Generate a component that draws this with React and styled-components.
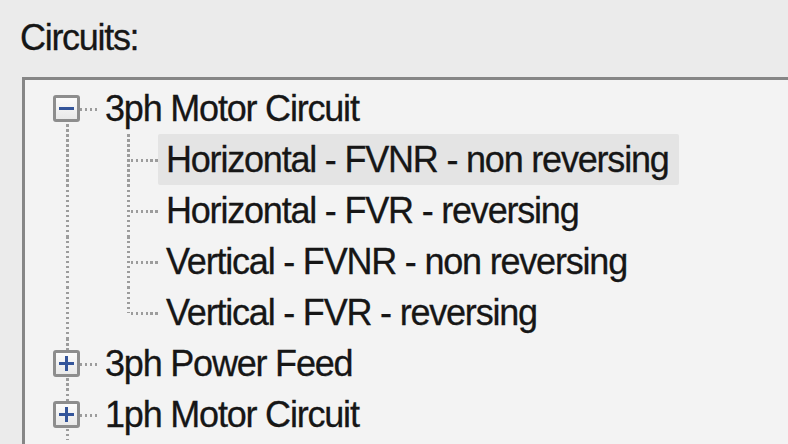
import React from "react"
import styled, { createGlobalStyle } from "styled-components"

const Global = createGlobalStyle`
  html, body {
    margin: 0;
    padding: 0;
    background: #ebebeb;
    overflow: hidden;
  }
  body {
    width: 788px;
    height: 444px;
    font-family: "Liberation Sans", Arial, sans-serif;
    color: #161616;
  }
`

const Window = styled.div`
  display: flex;
  flex-direction: column;
  height: 444px;
  padding-top: 18px;
  box-sizing: border-box;
`

const Label = styled.div`
  font-size: 36px;
  line-height: 40px;
  padding-left: 20px;
  letter-spacing: -1.3px;
  margin-bottom: 19px;
  -webkit-text-stroke: 0.3px #161616;
`

const Panel = styled.div`
  margin-left: 22px;
  flex: 1;
  min-height: 0;
  overflow: hidden;
  background: #f3f3f3;
  border-top: 3px solid #868686;
  border-left: 3px solid #868686;
  padding-top: 3px;
  padding-left: 28px;
  box-sizing: border-box;
`

const Row = styled.div`
  display: flex;
  height: 51px;
  align-items: stretch;
`

const dots = `repeating-linear-gradient(var(--dir), #9c9c9c 0 2.5px, transparent 2.5px 5px)`

const Indent = styled.div`
  position: relative;
  width: ${p => p.$w}px;
  flex: none;
  &::before {
    content: "";
    display: ${p => (p.$line ? "block" : "none")};
    position: absolute;
    left: 13px;
    top: 0;
    bottom: 0;
    width: 3px;
    --dir: to bottom;
    background: ${dots};
  }
`

const Node = styled.div`
  position: relative;
  width: 44px;
  flex: none;
  display: flex;
  align-items: center;
  &::before {
    content: "";
    display: ${p => (p.$v === "none" ? "none" : "block")};
    position: absolute;
    left: 13px;
    top: ${p => (p.$v === "bottom" ? "50%" : "0")};
    bottom: ${p => (p.$v === "top" ? "50%" : "0")};
    width: 3px;
    --dir: to bottom;
    background: ${dots};
  }
  &::after {
    content: "";
    position: absolute;
    left: 14px;
    right: 0;
    top: calc(50% - 1px);
    height: 3px;
    --dir: to left;
    background: ${dots};
  }
`

const Expander = styled.div`
  position: relative;
  z-index: 1;
  width: 27px;
  height: 27px;
  box-sizing: border-box;
  border: 3px solid #8d8d8d;
  border-radius: 3px;
  background: linear-gradient(#fbfbfb, #e9e9e9);
  display: flex;
  align-items: center;
  justify-content: center;
  &::before {
    content: "";
    position: absolute;
    width: 15px;
    height: 3px;
    background: #34559a;
  }
  &::after {
    content: "";
    display: ${p => (p.$open ? "none" : "block")};
    position: absolute;
    width: 3px;
    height: 15px;
    background: #34559a;
  }
`

const Text = styled.div`
  display: flex;
  align-items: center;
  padding: 0 10px 0 8px;
  font-size: 36px;
  letter-spacing: -1.2px;
  white-space: nowrap;
  -webkit-text-stroke: 0.3px #161616;
  background: ${p => (p.$selected ? "#e4e4e4" : "transparent")};
  border-radius: 2px;
`

const tree = [
  {
    label: "3ph Motor Circuit",
    open: true,
    children: [
      { label: "Horizontal - FVNR - non reversing", selected: true },
      { label: "Horizontal - FVR - reversing" },
      { label: "Vertical - FVNR - non reversing" },
      { label: "Vertical - FVR - reversing" },
    ],
  },
  { label: "3ph Power Feed", children: [] },
  { label: "1ph Motor Circuit", children: [] },
]

export default function App() {
  const rows = []
  tree.forEach((root, i) => {
    rows.push(
      <Row key={root.label}>
        <Node $v={i === 0 ? "bottom" : "full"}>
          <Expander $open={root.open} />
        </Node>
        <Text $selected={root.selected}>{root.label}</Text>
      </Row>
    )
    if (root.open) {
      root.children.forEach((child, j) => {
        const last = j === root.children.length - 1
        rows.push(
          <Row key={child.label}>
            <Indent $w={61} $line />
            <Node $v={last ? "top" : "full"} />
            <Text $selected={child.selected}>{child.label}</Text>
          </Row>
        )
      })
    }
  })

  return (
    <>
      <Global />
      <Window>
        <Label>Circuits:</Label>
        <Panel>{rows}</Panel>
      </Window>
    </>
  )
}
